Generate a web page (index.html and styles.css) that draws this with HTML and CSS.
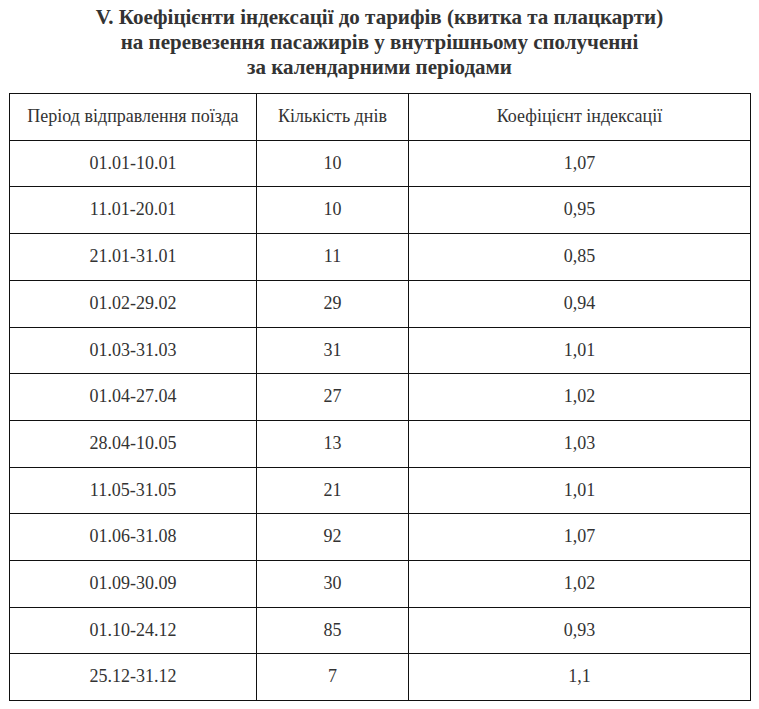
FILE: index.html
```html
<!DOCTYPE html>
<html lang="uk">
<head>
<meta charset="utf-8">
<title>Коефіцієнти індексації</title>
<link rel="stylesheet" href="styles.css">
</head>
<body>
<div class="page">
  <h2 class="title">V. Коефіцієнти індексації до тарифів (квитка та плацкарти)<br>на перевезення пасажирів у внутрішньому сполученні<br>за календарними періодами</h2>
  <table class="grid">
    <colgroup><col class="c1"><col class="c2"><col class="c3"></colgroup>
    <tr><td>Період відправлення поїзда</td><td>Кількість днів</td><td>Коефіцієнт індексації</td></tr>
    <tr><td>01.01-10.01</td><td>10</td><td>1,07</td></tr>
    <tr><td>11.01-20.01</td><td>10</td><td>0,95</td></tr>
    <tr><td>21.01-31.01</td><td>11</td><td>0,85</td></tr>
    <tr><td>01.02-29.02</td><td>29</td><td>0,94</td></tr>
    <tr><td>01.03-31.03</td><td>31</td><td>1,01</td></tr>
    <tr><td>01.04-27.04</td><td>27</td><td>1,02</td></tr>
    <tr><td>28.04-10.05</td><td>13</td><td>1,03</td></tr>
    <tr><td>11.05-31.05</td><td>21</td><td>1,01</td></tr>
    <tr><td>01.06-31.08</td><td>92</td><td>1,07</td></tr>
    <tr><td>01.09-30.09</td><td>30</td><td>1,02</td></tr>
    <tr><td>01.10-24.12</td><td>85</td><td>0,93</td></tr>
    <tr><td>25.12-31.12</td><td>7</td><td>1,1</td></tr>
  </table>
</div>
</body>
</html>
```
FILE: styles.css
```css
html, body { margin: 0; padding: 0; background: #fff; }
body { font-family: "Liberation Serif", "Times New Roman", serif; color: #333; }
.page { padding: 5px 9px 0 9px; }
.title {
  margin: 0 0 13px 0;
  text-align: center;
  font-size: 21px;
  line-height: 25px;
  font-weight: bold;
  color: #333;
}
.grid {
  width: 741px;
  border-collapse: collapse;
  table-layout: fixed;
  font-size: 18px;
}
.c1 { width: 247px; }
.c2 { width: 152px; }
.c3 { width: 342px; }
.grid td {
  border: 1px solid #111;
  text-align: center;
  vertical-align: middle;
  padding: 12px 0;
  line-height: 21.7px;
  color: #333;
}
```
